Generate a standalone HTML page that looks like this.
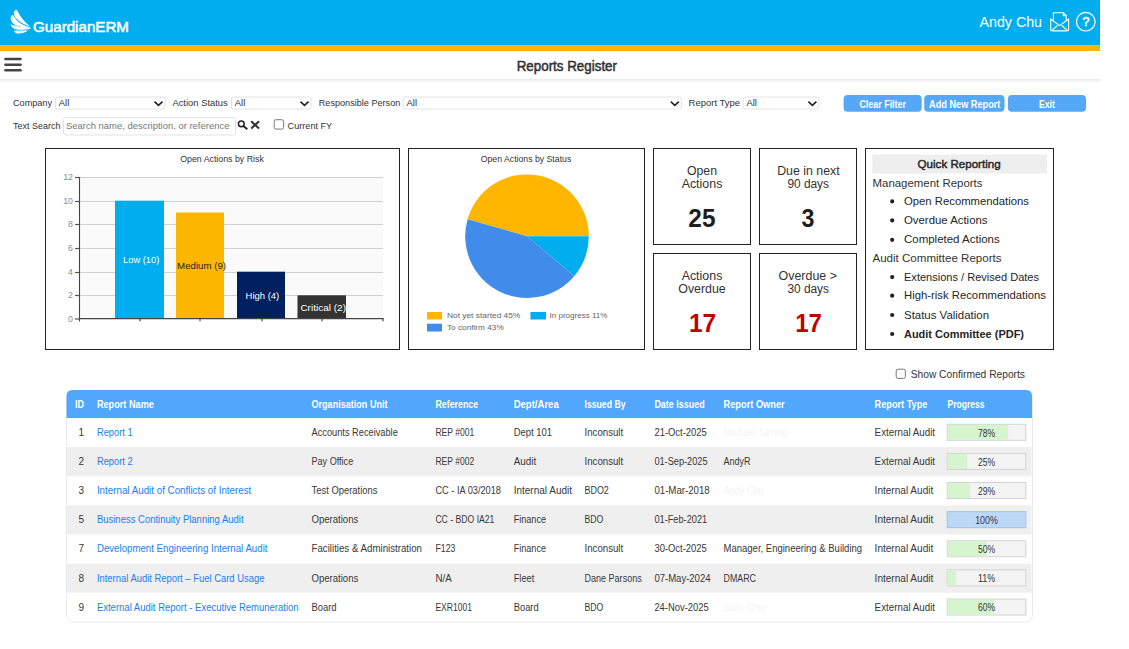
<!DOCTYPE html>
<html><head><meta charset="utf-8"><title>Reports Register</title>
<style>
*{margin:0;padding:0}
html,body{width:1129px;height:649px;overflow:hidden;background:#fff;font-family:"Liberation Sans",sans-serif}
svg{position:absolute;left:0;top:0;display:block}
</style></head><body>
<svg width="1129" height="649" viewBox="0 0 1129 649" font-family="Liberation Sans, sans-serif">
<rect x="0" y="0" width="1100" height="45" fill="#00aeef"/>
<rect x="0" y="45" width="1100" height="6" fill="#fdb50c"/>
<defs><linearGradient id="sh" x1="0" y1="0" x2="0" y2="1"><stop offset="0" stop-color="#ebebeb"/><stop offset="1" stop-color="#ffffff"/></linearGradient></defs>
<rect x="0" y="79" width="1100" height="4" fill="url(#sh)"/>
<g fill="#fff">
<path d="M16 9.4 C13.3 11 13.4 15 16 18.2 C19 21.7 24 24.6 30.4 26.7 C25 22.5 20.6 17 18.6 13 C17.8 11.4 17 9.9 16 9.4 Z"/>
<path d="M12.4 15.1 C13.6 15 14.6 17.6 16.2 19.7 C19.2 23.2 24 25.6 30.4 27.5 C24 27.6 18 26.9 14.5 24.6 C11.4 22.6 10.2 19.6 10.8 17 C11.1 16 11.7 15.3 12.4 15.1 Z"/>
<path d="M10.6 24.3 C12 25 14 25.4 18 26.2 C22 26.9 26 27.3 30.5 27.5 L30.3 29 C26 29.8 21 30 16.5 29.4 C13 28.8 11 27 10.6 24.3 Z"/>
<path d="M13.9 30.7 C19 30.6 24 30.5 28.2 30.3 C25 32.6 21 33.9 17.5 33.6 C15.8 33.4 14.6 32.3 13.9 30.7 Z"/>
</g>
<text x="33.00" y="32.20" font-size="15.5" fill="#fff" textLength="96.00" lengthAdjust="spacingAndGlyphs" stroke="#fff" stroke-width="0.55">GuardianERM</text>
<text x="979.50" y="27.00" font-size="14.5" fill="#fff" textLength="62.50" lengthAdjust="spacingAndGlyphs">Andy Chu</text>
<g fill="none" stroke="#fff" stroke-width="1.15" stroke-linejoin="round" stroke-linecap="round">
<path d="M1050.7 19 L1050.7 29.2 Q1050.7 30.9 1052.4 30.9 L1066.9 30.9 Q1068.6 30.9 1068.6 29.2 L1068.6 19"/>
<path d="M1050.9 19.2 L1059.6 25.6 L1068.4 19.2"/>
<path d="M1052.6 29.9 L1057.2 25.8 M1066.7 29.9 L1062.1 25.8"/>
<path d="M1053.4 20.3 L1053.4 12.7 L1063.3 12.7 L1066.2 15.6 L1066.2 20.3"/>
<path d="M1063.3 12.7 L1063.3 15.6 L1066.2 15.6"/>
</g>
<circle cx="1085.8" cy="21.7" r="9.3" fill="none" stroke="#fff" stroke-width="1.2"/>
<text x="1085.90" y="26.30" font-size="12.5" fill="#fff" text-anchor="middle" stroke="#fff" stroke-width="0.6">?</text>
<line x1="5.5" y1="59" x2="20.5" y2="59" stroke="#444" stroke-width="2.6" stroke-linecap="round"/>
<line x1="5.5" y1="64.7" x2="20.5" y2="64.7" stroke="#444" stroke-width="2.6" stroke-linecap="round"/>
<line x1="5.5" y1="70.3" x2="20.5" y2="70.3" stroke="#444" stroke-width="2.6" stroke-linecap="round"/>
<text x="516.70" y="70.70" font-size="13.8" fill="#333" textLength="100.30" lengthAdjust="spacingAndGlyphs" stroke="#333" stroke-width="0.5">Reports Register</text>
<text x="13.00" y="106.40" font-size="9.5" fill="#333" textLength="39.00" lengthAdjust="spacingAndGlyphs">Company</text>
<rect x="55.5" y="97.0" width="109.5" height="12.0" rx="2" fill="#fff" stroke="#e3e3e3"/>
<text x="58.80" y="106.40" font-size="9.5" fill="#333" textLength="10.50" lengthAdjust="spacingAndGlyphs">All</text>
<path d="M154.5 101.6 L158.5 105.4 L162.5 101.6" fill="none" stroke="#222" stroke-width="1.6"/>
<text x="172.40" y="106.40" font-size="9.5" fill="#333" textLength="55.40" lengthAdjust="spacingAndGlyphs">Action Status</text>
<rect x="231.5" y="97.0" width="79.5" height="12.0" rx="2" fill="#fff" stroke="#e3e3e3"/>
<text x="234.80" y="106.40" font-size="9.5" fill="#333" textLength="10.50" lengthAdjust="spacingAndGlyphs">All</text>
<path d="M300.5 101.6 L304.5 105.4 L308.5 101.6" fill="none" stroke="#222" stroke-width="1.6"/>
<text x="318.80" y="106.40" font-size="9.5" fill="#333" textLength="81.50" lengthAdjust="spacingAndGlyphs">Responsible Person</text>
<rect x="403.2" y="97.0" width="278.09999999999997" height="12.0" rx="2" fill="#fff" stroke="#e3e3e3"/>
<text x="406.50" y="106.40" font-size="9.5" fill="#333" textLength="10.50" lengthAdjust="spacingAndGlyphs">All</text>
<path d="M670.8 101.6 L674.8 105.4 L678.8 101.6" fill="none" stroke="#222" stroke-width="1.6"/>
<text x="688.60" y="106.40" font-size="9.5" fill="#333" textLength="51.40" lengthAdjust="spacingAndGlyphs">Report Type</text>
<rect x="743.1" y="97.0" width="75.79999999999995" height="12.0" rx="2" fill="#fff" stroke="#e3e3e3"/>
<text x="746.40" y="106.40" font-size="9.5" fill="#333" textLength="10.50" lengthAdjust="spacingAndGlyphs">All</text>
<path d="M808.4 101.6 L812.4 105.4 L816.4 101.6" fill="none" stroke="#222" stroke-width="1.6"/>
<rect x="843.6" y="95" width="78.1" height="16.8" rx="4" fill="#55a8f7"/>
<text x="859.40" y="107.50" font-size="10.5" fill="#fff" font-weight="bold" textLength="46.60" lengthAdjust="spacingAndGlyphs">Clear Filter</text>
<rect x="924.2" y="95" width="80.3" height="16.8" rx="4" fill="#55a8f7"/>
<text x="929.10" y="107.50" font-size="10.5" fill="#fff" font-weight="bold" textLength="71.30" lengthAdjust="spacingAndGlyphs">Add New Report</text>
<rect x="1007.9" y="95" width="78.1" height="16.8" rx="4" fill="#55a8f7"/>
<text x="1038.90" y="107.50" font-size="10.5" fill="#fff" font-weight="bold" textLength="16.10" lengthAdjust="spacingAndGlyphs">Exit</text>
<text x="13.00" y="128.50" font-size="9.5" fill="#333" textLength="47.40" lengthAdjust="spacingAndGlyphs">Text Search</text>
<rect x="63.5" y="117.5" width="172" height="17.5" rx="2" fill="#fff" stroke="#e3e3e3"/>
<text x="66.00" y="129.00" font-size="9.5" fill="#777" textLength="163.40" lengthAdjust="spacingAndGlyphs">Search name, description, or reference</text>
<circle cx="241.3" cy="123.8" r="2.9" fill="none" stroke="#222" stroke-width="1.5"/>
<line x1="243.4" y1="126" x2="247.3" y2="129.2" stroke="#222" stroke-width="1.9"/>
<path d="M251.2 121.3 L259 128.6 M259 121.3 L251.2 128.6" stroke="#333" stroke-width="2.1"/>
<rect x="274.2" y="119.7" width="9.4" height="9.4" rx="1.8" fill="#fff" stroke="#7a7a7a" stroke-width="1"/>
<text x="287.60" y="129.00" font-size="9.5" fill="#333" textLength="44.60" lengthAdjust="spacingAndGlyphs">Current FY</text>
<rect x="45.5" y="148.5" width="354" height="201" fill="#fff" stroke="#222" stroke-width="1"/>
<rect x="408.5" y="148.5" width="236" height="201" fill="#fff" stroke="#222" stroke-width="1"/>
<rect x="653.5" y="148.5" width="97" height="96" fill="#fff" stroke="#222" stroke-width="1"/>
<rect x="759.5" y="148.5" width="97" height="96" fill="#fff" stroke="#222" stroke-width="1"/>
<rect x="653.5" y="253.5" width="97" height="96" fill="#fff" stroke="#222" stroke-width="1"/>
<rect x="759.5" y="253.5" width="97" height="96" fill="#fff" stroke="#222" stroke-width="1"/>
<rect x="865.5" y="148.5" width="188" height="201" fill="#fff" stroke="#222" stroke-width="1"/>
<g transform="translate(45,148)">
<text x="177.00" y="14.00" font-size="8.7" fill="#333" text-anchor="middle" textLength="83.70" lengthAdjust="spacingAndGlyphs">Open Actions by Risk</text>
<rect x="35" y="29" width="303" height="141" fill="#fafafa"/>
<line x1="35" y1="29.5" x2="338" y2="29.5" stroke="#d0d0d0" stroke-width="1"/>
<line x1="30" y1="29.5" x2="35" y2="29.5" stroke="#555" stroke-width="1.2"/>
<text x="28.00" y="32.00" font-size="8.8" fill="#8c8c8c" text-anchor="end">12</text>
<line x1="35" y1="53.5" x2="338" y2="53.5" stroke="#d0d0d0" stroke-width="1"/>
<line x1="30" y1="53.5" x2="35" y2="53.5" stroke="#555" stroke-width="1.2"/>
<text x="28.00" y="56.00" font-size="8.8" fill="#8c8c8c" text-anchor="end">10</text>
<line x1="35" y1="76.5" x2="338" y2="76.5" stroke="#d0d0d0" stroke-width="1"/>
<line x1="30" y1="76.5" x2="35" y2="76.5" stroke="#555" stroke-width="1.2"/>
<text x="28.00" y="79.00" font-size="8.8" fill="#8c8c8c" text-anchor="end">8</text>
<line x1="35" y1="100.5" x2="338" y2="100.5" stroke="#d0d0d0" stroke-width="1"/>
<line x1="30" y1="100.5" x2="35" y2="100.5" stroke="#555" stroke-width="1.2"/>
<text x="28.00" y="103.00" font-size="8.8" fill="#8c8c8c" text-anchor="end">6</text>
<line x1="35" y1="124.5" x2="338" y2="124.5" stroke="#d0d0d0" stroke-width="1"/>
<line x1="30" y1="124.5" x2="35" y2="124.5" stroke="#555" stroke-width="1.2"/>
<text x="28.00" y="127.00" font-size="8.8" fill="#8c8c8c" text-anchor="end">4</text>
<line x1="35" y1="147.5" x2="338" y2="147.5" stroke="#d0d0d0" stroke-width="1"/>
<line x1="30" y1="147.5" x2="35" y2="147.5" stroke="#555" stroke-width="1.2"/>
<text x="28.00" y="150.00" font-size="8.8" fill="#8c8c8c" text-anchor="end">2</text>
<line x1="30" y1="171.0" x2="35" y2="171.0" stroke="#555" stroke-width="1.2"/>
<text x="28.00" y="173.50" font-size="8.8" fill="#8c8c8c" text-anchor="end">0</text>
<rect x="70" y="52.7" width="49" height="118.3" fill="#00aeef"/>
<rect x="131" y="64.5" width="48" height="106.5" fill="#fdb600"/>
<rect x="192" y="123.7" width="48" height="47.3" fill="#002060"/>
<rect x="252.5" y="147.3" width="48.5" height="23.7" fill="#333333"/>
<line x1="34.5" y1="29" x2="34.5" y2="173.5" stroke="#444" stroke-width="1.1"/>
<line x1="34" y1="170.6" x2="338.5" y2="170.6" stroke="#444" stroke-width="1.3"/>
<line x1="95" y1="170.6" x2="95" y2="173.2" stroke="#444" stroke-width="1.2"/>
<line x1="155" y1="170.6" x2="155" y2="173.2" stroke="#444" stroke-width="1.2"/>
<line x1="217" y1="170.6" x2="217" y2="173.2" stroke="#444" stroke-width="1.2"/>
<line x1="277" y1="170.6" x2="277" y2="173.2" stroke="#444" stroke-width="1.2"/>
<line x1="338" y1="170.6" x2="338" y2="173.2" stroke="#444" stroke-width="1.2"/>
<text x="96.20" y="115.20" font-size="9.5" fill="#fff" text-anchor="middle" textLength="36.40" lengthAdjust="spacingAndGlyphs">Low (10)</text>
<text x="156.60" y="121.00" font-size="9.5" fill="#222" text-anchor="middle" textLength="49.00" lengthAdjust="spacingAndGlyphs">Medium (9)</text>
<text x="217.40" y="150.80" font-size="9.5" fill="#fff" text-anchor="middle" textLength="33.60" lengthAdjust="spacingAndGlyphs">High (4)</text>
<clipPath id="cc"><rect x="252" y="140" width="49.5" height="40"/></clipPath>
<text x="278.20" y="162.60" font-size="9.5" fill="#fff" text-anchor="middle" textLength="45.60" lengthAdjust="spacingAndGlyphs" clip-path="url(#cc)">Critical (2)</text>
</g>
<g transform="translate(408,148)">
<text x="118.00" y="14.00" font-size="8.7" fill="#333" text-anchor="middle" textLength="90.50" lengthAdjust="spacingAndGlyphs">Open Actions by Status</text>
<path d="M119 88.2 L180.80 88.20 A61.8 61.8 0 0 0 59.59 71.17 Z" fill="#ffb600"/>
<path d="M119 88.2 L180.80 88.20 A61.8 61.8 0 0 1 166.34 127.92 Z" fill="#00aeef"/>
<path d="M119 88.2 L166.34 127.92 A61.8 61.8 0 0 1 59.59 71.17 Z" fill="#418bea"/>
<rect x="19" y="164" width="15" height="7.5" fill="#ffb600"/>
<rect x="122.5" y="164" width="15.5" height="7.5" fill="#00aeef"/>
<rect x="19" y="175.7" width="15" height="7.8" fill="#418bea"/>
<text x="39.00" y="170.30" font-size="7.8" fill="#666" textLength="73.30" lengthAdjust="spacingAndGlyphs">Not yet started 45%</text>
<text x="141.50" y="170.30" font-size="7.8" fill="#666" textLength="58.00" lengthAdjust="spacingAndGlyphs">In progress 11%</text>
<text x="39.00" y="181.80" font-size="7.8" fill="#666" textLength="56.70" lengthAdjust="spacingAndGlyphs">To confirm 43%</text>
</g>
<text x="702.00" y="174.70" font-size="12" fill="#333" text-anchor="middle" textLength="30.10" lengthAdjust="spacingAndGlyphs">Open</text>
<text x="702.00" y="187.70" font-size="12" fill="#333" text-anchor="middle" textLength="40.70" lengthAdjust="spacingAndGlyphs">Actions</text>
<text x="701.90" y="226.90" font-size="25.5" fill="#1e1e1e" font-weight="bold" text-anchor="middle" textLength="27.10" lengthAdjust="spacingAndGlyphs">25</text>
<text x="808.40" y="174.70" font-size="12" fill="#333" text-anchor="middle" textLength="62.40" lengthAdjust="spacingAndGlyphs">Due in next</text>
<text x="808.20" y="187.70" font-size="12" fill="#333" text-anchor="middle" textLength="41.60" lengthAdjust="spacingAndGlyphs">90 days</text>
<text x="808.00" y="226.90" font-size="25.5" fill="#1e1e1e" font-weight="bold" text-anchor="middle" textLength="12.90" lengthAdjust="spacingAndGlyphs">3</text>
<text x="702.00" y="280.00" font-size="12" fill="#333" text-anchor="middle" textLength="40.70" lengthAdjust="spacingAndGlyphs">Actions</text>
<text x="702.00" y="292.50" font-size="12" fill="#333" text-anchor="middle" textLength="47.50" lengthAdjust="spacingAndGlyphs">Overdue</text>
<text x="702.60" y="331.50" font-size="25.5" fill="#c00000" font-weight="bold" text-anchor="middle" textLength="27.20" lengthAdjust="spacingAndGlyphs">17</text>
<text x="807.75" y="280.00" font-size="12" fill="#333" text-anchor="middle" textLength="58.30" lengthAdjust="spacingAndGlyphs">Overdue &gt;</text>
<text x="808.20" y="292.50" font-size="12" fill="#333" text-anchor="middle" textLength="41.60" lengthAdjust="spacingAndGlyphs">30 days</text>
<text x="808.60" y="331.50" font-size="25.5" fill="#c00000" font-weight="bold" text-anchor="middle" textLength="26.80" lengthAdjust="spacingAndGlyphs">17</text>
<rect x="872.3" y="154.5" width="174.7" height="19" fill="#eeeeee"/>
<text x="917.60" y="167.50" font-size="11.8" fill="#262626" textLength="83.00" lengthAdjust="spacingAndGlyphs" stroke="#262626" stroke-width="0.45">Quick Reporting</text>
<text x="872.50" y="186.60" font-size="11.5" fill="#333" textLength="110.00" lengthAdjust="spacingAndGlyphs">Management Reports</text>
<circle cx="892.2" cy="201.4" r="2.1" fill="#222"/>
<text x="904.00" y="205.00" font-size="11.5" fill="#262626" textLength="125.00" lengthAdjust="spacingAndGlyphs">Open Recommendations</text>
<circle cx="892.2" cy="220.4" r="2.1" fill="#222"/>
<text x="904.00" y="224.00" font-size="11.5" fill="#262626" textLength="83.50" lengthAdjust="spacingAndGlyphs">Overdue Actions</text>
<circle cx="892.2" cy="239.8" r="2.1" fill="#222"/>
<text x="904.00" y="243.40" font-size="11.5" fill="#262626" textLength="95.70" lengthAdjust="spacingAndGlyphs">Completed Actions</text>
<circle cx="892.2" cy="277.1" r="2.1" fill="#222"/>
<text x="904.00" y="280.70" font-size="11.5" fill="#262626" textLength="135.00" lengthAdjust="spacingAndGlyphs">Extensions / Revised Dates</text>
<circle cx="892.2" cy="295.7" r="2.1" fill="#222"/>
<text x="904.00" y="299.30" font-size="11.5" fill="#262626" textLength="142.00" lengthAdjust="spacingAndGlyphs">High-risk Recommendations</text>
<circle cx="892.2" cy="315.0" r="2.1" fill="#222"/>
<text x="904.00" y="318.60" font-size="11.5" fill="#262626" textLength="85.00" lengthAdjust="spacingAndGlyphs">Status Validation</text>
<circle cx="892.2" cy="334.0" r="2.1" fill="#222"/>
<text x="904.00" y="337.60" font-size="11.5" fill="#262626" font-weight="bold" textLength="120.00" lengthAdjust="spacingAndGlyphs">Audit Committee (PDF)</text>
<text x="872.50" y="261.60" font-size="11.5" fill="#333" textLength="129.00" lengthAdjust="spacingAndGlyphs">Audit Committee Reports</text>
<rect x="896.2" y="369.2" width="9.2" height="9.2" rx="1.8" fill="#fff" stroke="#7a7a7a"/>
<text x="910.70" y="377.80" font-size="10.5" fill="#333" textLength="114.30" lengthAdjust="spacingAndGlyphs">Show Confirmed Reports</text>
<rect x="66.5" y="390.5" width="966.0" height="231.5" rx="7" fill="#fff" stroke="#ebebeb" stroke-width="1"/>
<path d="M66.5 418 L66.5 396 Q66.5 390 72.5 390 L1026 390 Q1032 390 1032 396 L1032 418 Z" fill="#50a7fb"/>
<text x="74.90" y="408.10" font-size="10" fill="#fff" font-weight="bold" textLength="9.10" lengthAdjust="spacingAndGlyphs">ID</text>
<text x="96.90" y="408.10" font-size="10" fill="#fff" font-weight="bold" textLength="57.00" lengthAdjust="spacingAndGlyphs">Report Name</text>
<text x="311.50" y="408.10" font-size="10" fill="#fff" font-weight="bold" textLength="76.00" lengthAdjust="spacingAndGlyphs">Organisation Unit</text>
<text x="435.40" y="408.10" font-size="10" fill="#fff" font-weight="bold" textLength="42.80" lengthAdjust="spacingAndGlyphs">Reference</text>
<text x="513.70" y="408.10" font-size="10" fill="#fff" font-weight="bold" textLength="45.00" lengthAdjust="spacingAndGlyphs">Dept/Area</text>
<text x="584.50" y="408.10" font-size="10" fill="#fff" font-weight="bold" textLength="41.00" lengthAdjust="spacingAndGlyphs">Issued By</text>
<text x="654.40" y="408.10" font-size="10" fill="#fff" font-weight="bold" textLength="50.30" lengthAdjust="spacingAndGlyphs">Date Issued</text>
<text x="723.50" y="408.10" font-size="10" fill="#fff" font-weight="bold" textLength="61.20" lengthAdjust="spacingAndGlyphs">Report Owner</text>
<text x="874.60" y="408.10" font-size="10" fill="#fff" font-weight="bold" textLength="52.80" lengthAdjust="spacingAndGlyphs">Report Type</text>
<text x="947.60" y="408.10" font-size="10" fill="#fff" font-weight="bold" textLength="37.00" lengthAdjust="spacingAndGlyphs">Progress</text>
<text x="81.40" y="436.00" font-size="10" fill="#383838" text-anchor="middle">1</text>
<text x="96.90" y="436.00" font-size="10" fill="#1a7ef5" textLength="35.80" lengthAdjust="spacingAndGlyphs">Report 1</text>
<text x="311.50" y="436.00" font-size="10" fill="#383838" textLength="86.30" lengthAdjust="spacingAndGlyphs">Accounts Receivable</text>
<text x="435.40" y="436.00" font-size="10" fill="#383838" textLength="38.80" lengthAdjust="spacingAndGlyphs">REP #001</text>
<text x="513.70" y="436.00" font-size="10" fill="#383838" textLength="38.30" lengthAdjust="spacingAndGlyphs">Dept 101</text>
<text x="584.50" y="436.00" font-size="10" fill="#383838" textLength="38.70" lengthAdjust="spacingAndGlyphs">Inconsult</text>
<text x="654.40" y="436.00" font-size="10" fill="#383838" textLength="52.40" lengthAdjust="spacingAndGlyphs">21-Oct-2025</text>
<text x="723.50" y="436.00" font-size="10" fill="#f4f4f4" textLength="63.70" lengthAdjust="spacingAndGlyphs">Michael Strong</text>
<text x="874.60" y="436.00" font-size="10" fill="#383838" textLength="60.50" lengthAdjust="spacingAndGlyphs">External Audit</text>
<rect x="947.2" y="424.30" width="78.6" height="16" fill="#f4f4f4" stroke="#d2d2d2" stroke-width="1"/>
<rect x="947.7" y="424.80" width="60.5" height="15" fill="#d6f5cf"/>
<text x="986.50" y="436.60" font-size="10.8" fill="#333" text-anchor="middle" textLength="17.20" lengthAdjust="spacingAndGlyphs">78%</text>
<rect x="67.0" y="447.12" width="964.5" height="29.12" fill="#efefef"/>
<text x="81.40" y="465.12" font-size="10" fill="#383838" text-anchor="middle">2</text>
<text x="96.90" y="465.12" font-size="10" fill="#1a7ef5" textLength="35.80" lengthAdjust="spacingAndGlyphs">Report 2</text>
<text x="311.50" y="465.12" font-size="10" fill="#383838" textLength="41.70" lengthAdjust="spacingAndGlyphs">Pay Office</text>
<text x="435.40" y="465.12" font-size="10" fill="#383838" textLength="38.80" lengthAdjust="spacingAndGlyphs">REP #002</text>
<text x="513.70" y="465.12" font-size="10" fill="#383838" textLength="22.50" lengthAdjust="spacingAndGlyphs">Audit</text>
<text x="584.50" y="465.12" font-size="10" fill="#383838" textLength="38.70" lengthAdjust="spacingAndGlyphs">Inconsult</text>
<text x="654.40" y="465.12" font-size="10" fill="#383838" textLength="53.20" lengthAdjust="spacingAndGlyphs">01-Sep-2025</text>
<text x="723.50" y="465.12" font-size="10" fill="#383838" textLength="27.10" lengthAdjust="spacingAndGlyphs">AndyR</text>
<text x="874.60" y="465.12" font-size="10" fill="#383838" textLength="60.50" lengthAdjust="spacingAndGlyphs">External Audit</text>
<rect x="947.2" y="453.42" width="78.6" height="16" fill="#f4f4f4" stroke="#d2d2d2" stroke-width="1"/>
<rect x="947.7" y="453.92" width="19.4" height="15" fill="#d6f5cf"/>
<text x="986.50" y="465.72" font-size="10.8" fill="#333" text-anchor="middle" textLength="17.20" lengthAdjust="spacingAndGlyphs">25%</text>
<text x="81.40" y="494.24" font-size="10" fill="#383838" text-anchor="middle">3</text>
<text x="96.90" y="494.24" font-size="10" fill="#1a7ef5" textLength="154.40" lengthAdjust="spacingAndGlyphs">Internal Audit of Conflicts of Interest</text>
<text x="311.50" y="494.24" font-size="10" fill="#383838" textLength="66.00" lengthAdjust="spacingAndGlyphs">Test Operations</text>
<text x="435.40" y="494.24" font-size="10" fill="#383838" textLength="65.60" lengthAdjust="spacingAndGlyphs">CC - IA 03/2018</text>
<text x="513.70" y="494.24" font-size="10" fill="#383838" textLength="58.30" lengthAdjust="spacingAndGlyphs">Internal Audit</text>
<text x="584.50" y="494.24" font-size="10" fill="#383838" textLength="24.30" lengthAdjust="spacingAndGlyphs">BDO2</text>
<text x="654.40" y="494.24" font-size="10" fill="#383838" textLength="55.30" lengthAdjust="spacingAndGlyphs">01-Mar-2018</text>
<text x="723.50" y="494.24" font-size="10" fill="#f4f4f4" textLength="40.20" lengthAdjust="spacingAndGlyphs">Andy Chu</text>
<text x="874.60" y="494.24" font-size="10" fill="#383838" textLength="58.70" lengthAdjust="spacingAndGlyphs">Internal Audit</text>
<rect x="947.2" y="482.54" width="78.6" height="16" fill="#f4f4f4" stroke="#d2d2d2" stroke-width="1"/>
<rect x="947.7" y="483.04" width="22.5" height="15" fill="#d6f5cf"/>
<text x="986.50" y="494.84" font-size="10.8" fill="#333" text-anchor="middle" textLength="17.20" lengthAdjust="spacingAndGlyphs">29%</text>
<rect x="67.0" y="505.36" width="964.5" height="29.12" fill="#efefef"/>
<text x="81.40" y="523.36" font-size="10" fill="#383838" text-anchor="middle">5</text>
<text x="96.90" y="523.36" font-size="10" fill="#1a7ef5" textLength="146.70" lengthAdjust="spacingAndGlyphs">Business Continuity Planning Audit</text>
<text x="311.50" y="523.36" font-size="10" fill="#383838" textLength="46.80" lengthAdjust="spacingAndGlyphs">Operations</text>
<text x="435.40" y="523.36" font-size="10" fill="#383838" textLength="59.00" lengthAdjust="spacingAndGlyphs">CC - BDO IA21</text>
<text x="513.70" y="523.36" font-size="10" fill="#383838" textLength="32.30" lengthAdjust="spacingAndGlyphs">Finance</text>
<text x="584.50" y="523.36" font-size="10" fill="#383838" textLength="18.80" lengthAdjust="spacingAndGlyphs">BDO</text>
<text x="654.40" y="523.36" font-size="10" fill="#383838" textLength="52.80" lengthAdjust="spacingAndGlyphs">01-Feb-2021</text>
<text x="874.60" y="523.36" font-size="10" fill="#383838" textLength="58.70" lengthAdjust="spacingAndGlyphs">Internal Audit</text>
<rect x="947.2" y="511.66" width="78.6" height="16" fill="#bcd8f6" stroke="#9ec2ec" stroke-width="1"/>
<text x="986.50" y="523.96" font-size="10.8" fill="#335" text-anchor="middle" textLength="22.70" lengthAdjust="spacingAndGlyphs">100%</text>
<text x="81.40" y="552.48" font-size="10" fill="#383838" text-anchor="middle">7</text>
<text x="96.90" y="552.48" font-size="10" fill="#1a7ef5" textLength="170.60" lengthAdjust="spacingAndGlyphs">Development Engineering Internal Audit</text>
<text x="311.50" y="552.48" font-size="10" fill="#383838" textLength="110.50" lengthAdjust="spacingAndGlyphs">Facilities &amp; Administration</text>
<text x="435.40" y="552.48" font-size="10" fill="#383838" textLength="20.00" lengthAdjust="spacingAndGlyphs">F123</text>
<text x="513.70" y="552.48" font-size="10" fill="#383838" textLength="32.30" lengthAdjust="spacingAndGlyphs">Finance</text>
<text x="584.50" y="552.48" font-size="10" fill="#383838" textLength="38.70" lengthAdjust="spacingAndGlyphs">Inconsult</text>
<text x="654.40" y="552.48" font-size="10" fill="#383838" textLength="52.40" lengthAdjust="spacingAndGlyphs">30-Oct-2025</text>
<text x="723.50" y="552.48" font-size="10" fill="#383838" textLength="138.60" lengthAdjust="spacingAndGlyphs">Manager, Engineering &amp; Building</text>
<text x="874.60" y="552.48" font-size="10" fill="#383838" textLength="58.70" lengthAdjust="spacingAndGlyphs">Internal Audit</text>
<rect x="947.2" y="540.78" width="78.6" height="16" fill="#f4f4f4" stroke="#d2d2d2" stroke-width="1"/>
<rect x="947.7" y="541.28" width="38.8" height="15" fill="#d6f5cf"/>
<text x="986.50" y="553.08" font-size="10.8" fill="#333" text-anchor="middle" textLength="17.20" lengthAdjust="spacingAndGlyphs">50%</text>
<rect x="67.0" y="563.6" width="964.5" height="29.12" fill="#efefef"/>
<text x="81.40" y="581.60" font-size="10" fill="#383838" text-anchor="middle">8</text>
<text x="96.90" y="581.60" font-size="10" fill="#1a7ef5" textLength="167.50" lengthAdjust="spacingAndGlyphs">Internal Audit Report – Fuel Card Usage</text>
<text x="311.50" y="581.60" font-size="10" fill="#383838" textLength="46.80" lengthAdjust="spacingAndGlyphs">Operations</text>
<text x="435.40" y="581.60" font-size="10" fill="#383838" textLength="16.30" lengthAdjust="spacingAndGlyphs">N/A</text>
<text x="513.70" y="581.60" font-size="10" fill="#383838" textLength="20.60" lengthAdjust="spacingAndGlyphs">Fleet</text>
<text x="584.50" y="581.60" font-size="10" fill="#383838" textLength="57.20" lengthAdjust="spacingAndGlyphs">Dane Parsons</text>
<text x="654.40" y="581.60" font-size="10" fill="#383838" textLength="56.10" lengthAdjust="spacingAndGlyphs">07-May-2024</text>
<text x="723.50" y="581.60" font-size="10" fill="#383838" textLength="32.50" lengthAdjust="spacingAndGlyphs">DMARC</text>
<text x="874.60" y="581.60" font-size="10" fill="#383838" textLength="58.70" lengthAdjust="spacingAndGlyphs">Internal Audit</text>
<rect x="947.2" y="569.90" width="78.6" height="16" fill="#f4f4f4" stroke="#d2d2d2" stroke-width="1"/>
<rect x="947.7" y="570.40" width="8.5" height="15" fill="#d6f5cf"/>
<text x="986.50" y="582.20" font-size="10.8" fill="#333" text-anchor="middle" textLength="17.20" lengthAdjust="spacingAndGlyphs">11%</text>
<text x="81.40" y="610.72" font-size="10" fill="#383838" text-anchor="middle">9</text>
<text x="96.90" y="610.72" font-size="10" fill="#1a7ef5" textLength="201.70" lengthAdjust="spacingAndGlyphs">External Audit Report - Executive Remuneration</text>
<text x="311.50" y="610.72" font-size="10" fill="#383838" textLength="25.00" lengthAdjust="spacingAndGlyphs">Board</text>
<text x="435.40" y="610.72" font-size="10" fill="#383838" textLength="36.60" lengthAdjust="spacingAndGlyphs">EXR1001</text>
<text x="513.70" y="610.72" font-size="10" fill="#383838" textLength="25.00" lengthAdjust="spacingAndGlyphs">Board</text>
<text x="584.50" y="610.72" font-size="10" fill="#383838" textLength="18.80" lengthAdjust="spacingAndGlyphs">BDO</text>
<text x="654.40" y="610.72" font-size="10" fill="#383838" textLength="54.30" lengthAdjust="spacingAndGlyphs">24-Nov-2025</text>
<text x="723.50" y="610.72" font-size="10" fill="#f4f4f4" textLength="42.00" lengthAdjust="spacingAndGlyphs">Isaac Chiu</text>
<text x="874.60" y="610.72" font-size="10" fill="#383838" textLength="60.50" lengthAdjust="spacingAndGlyphs">External Audit</text>
<rect x="947.2" y="599.02" width="78.6" height="16" fill="#f4f4f4" stroke="#d2d2d2" stroke-width="1"/>
<rect x="947.7" y="599.52" width="46.6" height="15" fill="#d6f5cf"/>
<text x="986.50" y="611.32" font-size="10.8" fill="#333" text-anchor="middle" textLength="17.20" lengthAdjust="spacingAndGlyphs">60%</text>
</svg>
</body></html>
